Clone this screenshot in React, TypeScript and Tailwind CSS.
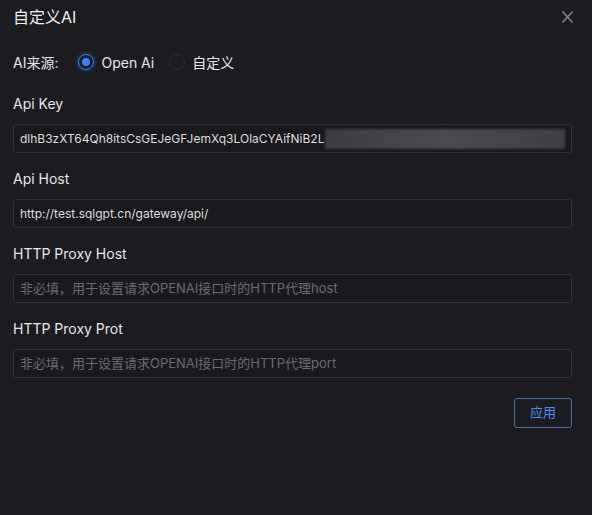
import React from "react";

const font = { fontFamily: '"PingFang SC", Inter, "Noto Sans CJK SC", sans-serif' };

function Field({ label, children }: { label: string; children: React.ReactNode }) {
  return (
    <div className="flex flex-col">
      <div className="h-[22px] leading-[22px] text-[14px] text-[#e6e6e8]">{label}</div>
      <div className="mt-[9px] h-[29px] flex items-center border border-[#313136] bg-[#19191d] rounded-[3px] px-[6px] overflow-hidden whitespace-nowrap">
        {children}
      </div>
      <div className="h-[15px]" />
    </div>
  );
}

export default function App() {
  return (
    <div className="w-[592px] h-[515px] bg-[#1c1b20] text-[#e6e6e8] pl-[13px] pr-[20px] pt-[5px] flex flex-col" style={font}>
      <div className="flex items-center justify-between h-[24px]">
        <div className="text-[16px] text-[#ececee]">自定义AI</div>
        <svg width="11" height="12" viewBox="0 0 11 12" className="-mr-[1px]">
          <path d="M0.5 0.5 L10.5 11.5 M10.5 0.5 L0.5 11.5" stroke="#8a8a8f" strokeWidth="1.3" />
        </svg>
      </div>
      <div className="mt-[22px] h-[22px] flex items-center text-[14px]">
        <span className="text-[#e6e6e8]">AI来源:</span>
        <span className="ml-[20px] w-[16px] h-[16px] rounded-full border border-[#3b82f6] flex items-center justify-center shadow-[0_0_4px_#1e4fa8]">
          <span className="w-[8px] h-[8px] rounded-full bg-[#3b82f6]" />
        </span>
        <span className="ml-[7px]">Open Ai</span>
        <span className="ml-[15px] w-[16px] h-[16px] rounded-full border border-[#2c2c31]" />
        <span className="ml-[7px]">自定义</span>
      </div>
      <div className="mt-[20px] flex flex-col">
        <Field label="Api Key">
          <span className="text-[#dcdcde] text-[12px]">dlhB3zXT64Qh8itsCsGEJeGFJemXq3LOlaCYAifNiB2L</span>
          <span className="flex-1 h-[20px] ml-[1px] bg-gradient-to-r from-[#3b3b40] via-[#4a4a4f] to-[#3e3e43] blur-[1px]" />
        </Field>
        <Field label="Api Host">
          <span className="text-[#dcdcde] text-[12px]">http://test.sqlgpt.cn/gateway/api/</span>
        </Field>
        <Field label="HTTP Proxy Host">
          <span className="text-[#6b6b70] text-[13px]">非必填，用于设置请求OPENAI接口时的HTTP代理host</span>
        </Field>
        <Field label="HTTP Proxy Prot">
          <span className="text-[#6b6b70] text-[13px]">非必填，用于设置请求OPENAI接口时的HTTP代理port</span>
        </Field>
      </div>
      <div className="flex justify-end mt-[5px]">
        <button className="w-[58px] h-[30px] border border-[#4d6fa3] rounded-[3px] text-[13px] text-[#4b8df0] bg-transparent">应用</button>
      </div>
    </div>
  );
}
